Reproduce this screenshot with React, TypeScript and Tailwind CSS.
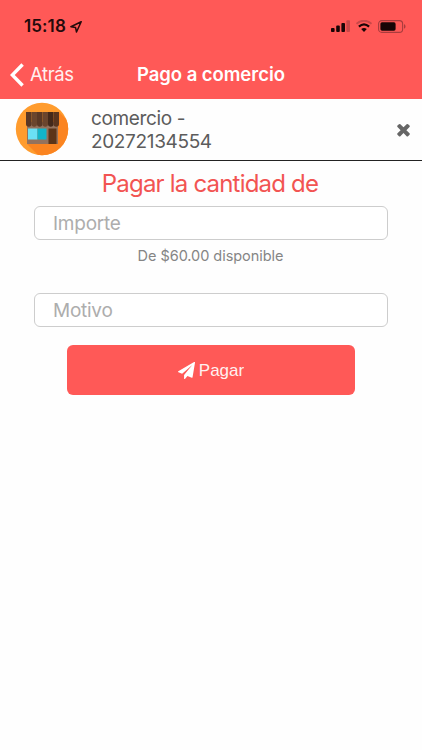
import { useState } from 'react';

const AWNING = ['#5a3825', '#6b452d', '#5a3825', '#6b452d', '#44291a', '#5a351e'];

function StatusBar() {
  return (
    <div className="flex h-[52px] items-center justify-between pl-6 pr-[16px]">
      <div className="flex items-center gap-[4px] pt-[1px]">
        <span className="text-[17px] font-semibold tracking-[0.1px] text-[#230a0b]">15:18</span>
        <svg className="h-[12px] w-[12px]" viewBox="0 0 12 12" fill="none" stroke="#230a0b" strokeWidth="1.500" strokeLinejoin="round">
          <path d="M11.200 0.800 L0.900 5.700 L5.500 6.400 L6.500 11 Z" />
        </svg>
      </div>
      <div className="flex items-center gap-[6px]">
        <svg className="h-[12px] w-[19px]" viewBox="0 0 19 12">
          <rect x="0" y="8" width="3.600" height="4" rx="0.900" fill="#180506" />
          <rect x="5.200" y="5.600" width="3.600" height="6.400" rx="0.900" fill="#180506" />
          <rect x="10.400" y="3" width="3.600" height="9" rx="0.900" fill="#180506" />
          <rect x="15.400" y="0.300" width="3.600" height="11.700" rx="0.900" fill="#c94849" />
        </svg>
        <svg className="h-[12px] w-[16px]" viewBox="0 0 16 12" fill="none">
          <path d="M0.500 3.800 C5 -0.300 11 -0.300 15.500 3.800" stroke="#c94849" strokeWidth="1.900" />
          <path d="M2.900 6.600 C6 3.900 10 3.900 13.100 6.600" stroke="#180506" strokeWidth="2.200" />
          <path d="M5.200 9.100 Q8 6.700 10.800 9.100 L8 12 Z" fill="#180506" />
        </svg>
        <svg className="h-[13px] w-[28px]" viewBox="0 0 28 13">
          <rect x="0.600" y="0.600" width="24" height="11.800" rx="3.200" fill="none" stroke="#a93c3d" strokeWidth="1.100" />
          <rect x="2.400" y="2.300" width="15.200" height="8.400" rx="1.600" fill="#180506" />
          <path d="M26 4.300 C28 5 28 8 26 8.700 Z" fill="#a93c3d" />
        </svg>
      </div>
    </div>
  );
}

function StoreIcon() {
  return (
    <svg className="h-[54px] w-[54px]" viewBox="0 0 54 54">
      <defs>
        <clipPath id="disc">
          <circle cx="27" cy="27" r="26.200" />
        </clipPath>
      </defs>
      <circle cx="27" cy="27" r="26.200" fill="#ff9c2e" />
      <path d="M12 42 L44 10 L60 26 V60 H30 Z" fill="#fb8420" clipPath="url(#disc)" />
      <rect x="12" y="20" width="31" height="22" fill="#94725d" />
      <rect x="13" y="26.500" width="9.500" height="11" fill="#6be0f5" />
      <rect x="22.500" y="26.500" width="9" height="11" fill="#12b5c9" />
      <rect x="33.500" y="26.500" width="8" height="15.500" fill="#5b3418" />
      {AWNING.map((fill, i) => (
        <path key={i} d="M0 0 H5.500 V12 A2.750 2.750 0 0 1 0 12 Z" transform={`translate(${11 + i * 5.5} 10)`} fill={fill} />
      ))}
    </svg>
  );
}

export default function App() {
  const [importe, setImporte] = useState('');
  const [motivo, setMotivo] = useState('');

  const inputClass =
    'block h-[34px] w-full rounded-[6px] border border-[#cdcdcd] bg-white pl-[18px] text-[19px] tracking-[-0.25px] text-[#555] placeholder:text-[#adadad] focus:outline-none';

  return (
    <div className="h-[750px] w-[422px] overflow-hidden bg-[#fefefe] font-['Inter','Liberation_Sans',sans-serif]">
      <header className="h-[99px] bg-[#ff5957] text-white">
        <StatusBar />
        <div className="grid h-[46px] grid-cols-[137px_148px_1fr] items-center">
          <button className="flex items-center gap-[6px] pl-[10px]">
            <svg className="h-[24px] w-[14px]" viewBox="0 0 14 24" fill="none" stroke="white" strokeWidth="3.400">
              <path d="M12.600 1.500 L2.300 12 L12.600 22.500" />
            </svg>
            <span className="text-[18.5px] tracking-[-0.4px] text-[#fff0ef]">Atrás</span>
          </button>
          <h1 className="whitespace-nowrap text-[18.5px] font-semibold tracking-[-0.05px]">Pago a comercio</h1>
        </div>
      </header>

      <section className="flex h-[62px] items-center border-b border-[#222] pb-[1px] pl-[15px] pr-[9px]">
        <StoreIcon />
        <p className="ml-[22px] flex-1 pt-[2px] text-[19px] leading-[23px] tracking-[-0.35px] text-[#5c5c5c]">
          comercio -
          <br />
          20272134554
        </p>
        <button>
          <svg className="h-[19px] w-[19px]" viewBox="0 0 1792 1792" fill="#666">
            <path d="M1490 1322q0 40-28 68l-136 136q-28 28-68 28t-68-28l-294-294-294 294q-28 28-68 28t-68-28l-136-136q-28-28-28-68t28-68l294-294-294-294q-28-28-28-68t28-68l136-136q28-28 68-28t68 28l294 294 294-294q28-28 68-28t68 28l136 136q28 28 28 68t-28 68l-294 294 294 294q28 28 28 68z" />
          </svg>
        </button>
      </section>

      <main className="px-[34px]">
        <h2 className="h-[45px] pr-[2px] text-center text-[24px] leading-[45px] tracking-[-0.8px] text-[#f25452]">
          Pagar la cantidad de
        </h2>
        <input className={inputClass} placeholder="Importe" value={importe} onChange={(e) => setImporte(e.target.value)} />
        <p className="h-[53px] pr-[1px] pt-[6px] text-center text-[14.5px] leading-[20px] tracking-[-0.05px] text-[#858585]">
          De $60.00 disponible
        </p>
        <input className={inputClass} placeholder="Motivo" value={motivo} onChange={(e) => setMotivo(e.target.value)} />
        <button className="mx-auto mt-[18px] flex h-[50px] w-[288px] items-center justify-center gap-[4px] rounded-[6px] bg-[#ff5957]">
          <svg className="h-[17px] w-[17px]" viewBox="0 0 1792 1792" fill="white">
            <path d="M1764 11q33 24 27 64l-256 1536q-5 29-32 45-14 8-31 8-11 0-24-5l-453-185-242 295q-18 23-49 23-13 0-22-4-19-7-30.500-23.500t-11.500-36.500v-349l864-1059-1069 925-395-162q-37-14-40-55-2-40 32-59l1664-960q15-9 32-9 20 0 36 11z" />
          </svg>
          <span className="h-[18px] overflow-hidden font-['Liberation_Sans',sans-serif] text-[17px] leading-[19px] text-[#fff0ef]">
            Pagar
          </span>
        </button>
      </main>
    </div>
  );
}
